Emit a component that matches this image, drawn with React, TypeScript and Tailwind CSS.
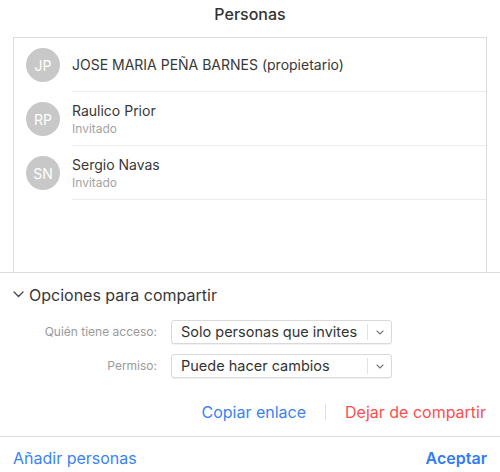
import React from "react";

const people = [
  { initials: "JP", name: "JOSE MARIA PEÑA BARNES (propietario)", sub: "" },
  { initials: "RP", name: "Raulico Prior", sub: "Invitado" },
  { initials: "SN", name: "Sergio Navas", sub: "Invitado" },
];

function Select({ value }: { value: string }) {
  return (
    <div className="flex h-[24px] w-[221px] items-center rounded-[3px] border border-[#d9d9d9] bg-white shadow-[0_1px_1px_rgba(0,0,0,0.06)]">
      <div className="flex-1 pl-[9px] text-[14.5px] leading-none text-[#333]">{value}</div>
      <div className="h-[16px] w-px bg-[#e2e2e2]" />
      <div className="flex w-[23px] items-center justify-center">
        <svg width="8" height="5" viewBox="0 0 8 5" fill="none">
          <path d="M1 1l3 3 3-3" stroke="#777" strokeWidth="1.1" strokeLinecap="round" strokeLinejoin="round" />
        </svg>
      </div>
    </div>
  );
}

export default function App() {
  return (
    <div
      className="flex h-[472px] w-[500px] flex-col bg-white text-[#333]"
      style={{ fontFamily: "Inter, 'Noto Sans', sans-serif" }}
    >
      <div className="flex h-[37px] items-start justify-center pt-[4px]">
        <span className="text-[16px] font-medium leading-[20px] text-[#333]">Personas</span>
      </div>
      <div className="mx-[13px] flex h-[235px] flex-col border-x border-t border-[#dcdcdc]">
        {people.map((p, i) => (
          <div key={i} className="flex h-[54px] items-center pl-[12px]">
            <div className="flex h-[34px] w-[34px] shrink-0 items-center justify-center rounded-full bg-[#c8c8c8] text-[14px] text-white">
              {p.initials}
            </div>
            <div className="ml-[12px] flex h-full flex-1 flex-col justify-center border-b border-[#ebebeb]">
              <div className="text-[14px] leading-[18px] text-[#383838]">{p.name}</div>
              {p.sub && <div className="mt-[1px] text-[12px] leading-[15px] text-[#a3a3a3]">{p.sub}</div>}
            </div>
          </div>
        ))}
      </div>
      <div className="h-px bg-[#dcdcdc]" />
      <div className="flex h-[163px] flex-col">
        <div className="flex h-[43px] items-center pl-[13px]">
          <svg width="11" height="7" viewBox="0 0 11 7" fill="none" className="mr-[5px]">
            <path d="M1 1l4.5 4.5L10 1" stroke="#444" strokeWidth="1.3" strokeLinecap="round" strokeLinejoin="round" />
          </svg>
          <span className="text-[16px] leading-none text-[#383838]">Opciones para compartir</span>
        </div>
        <div className="mt-[4px] flex flex-col gap-[10px]">
          <div className="flex items-center">
            <div className="w-[157px] text-right text-[12px] text-[#9a9a9a]">Quién tiene acceso:</div>
            <div className="ml-[14px]">
              <Select value="Solo personas que invites" />
            </div>
          </div>
          <div className="flex items-center">
            <div className="w-[157px] text-right text-[12px] text-[#9a9a9a]">Permiso:</div>
            <div className="ml-[14px]">
              <Select value="Puede hacer cambios" />
            </div>
          </div>
        </div>
        <div className="mt-[22px] flex items-center justify-end pr-[14px]">
          <span className="text-[16px] text-[#3a82f6]">Copiar enlace</span>
          <div className="mx-[19px] h-[16px] w-px bg-[#e0e0e0]" />
          <span className="text-[16px] text-[#ff4d4d]">Dejar de compartir</span>
        </div>
      </div>
      <div className="h-px bg-[#dcdcdc]" />
      <div className="flex flex-1 items-center justify-between px-[13px] pt-[6px]">
        <span className="text-[16px] text-[#3a82f6]">Añadir personas</span>
        <span className="text-[16px] font-semibold text-[#2f7cf6]">Aceptar</span>
      </div>
    </div>
  );
}
